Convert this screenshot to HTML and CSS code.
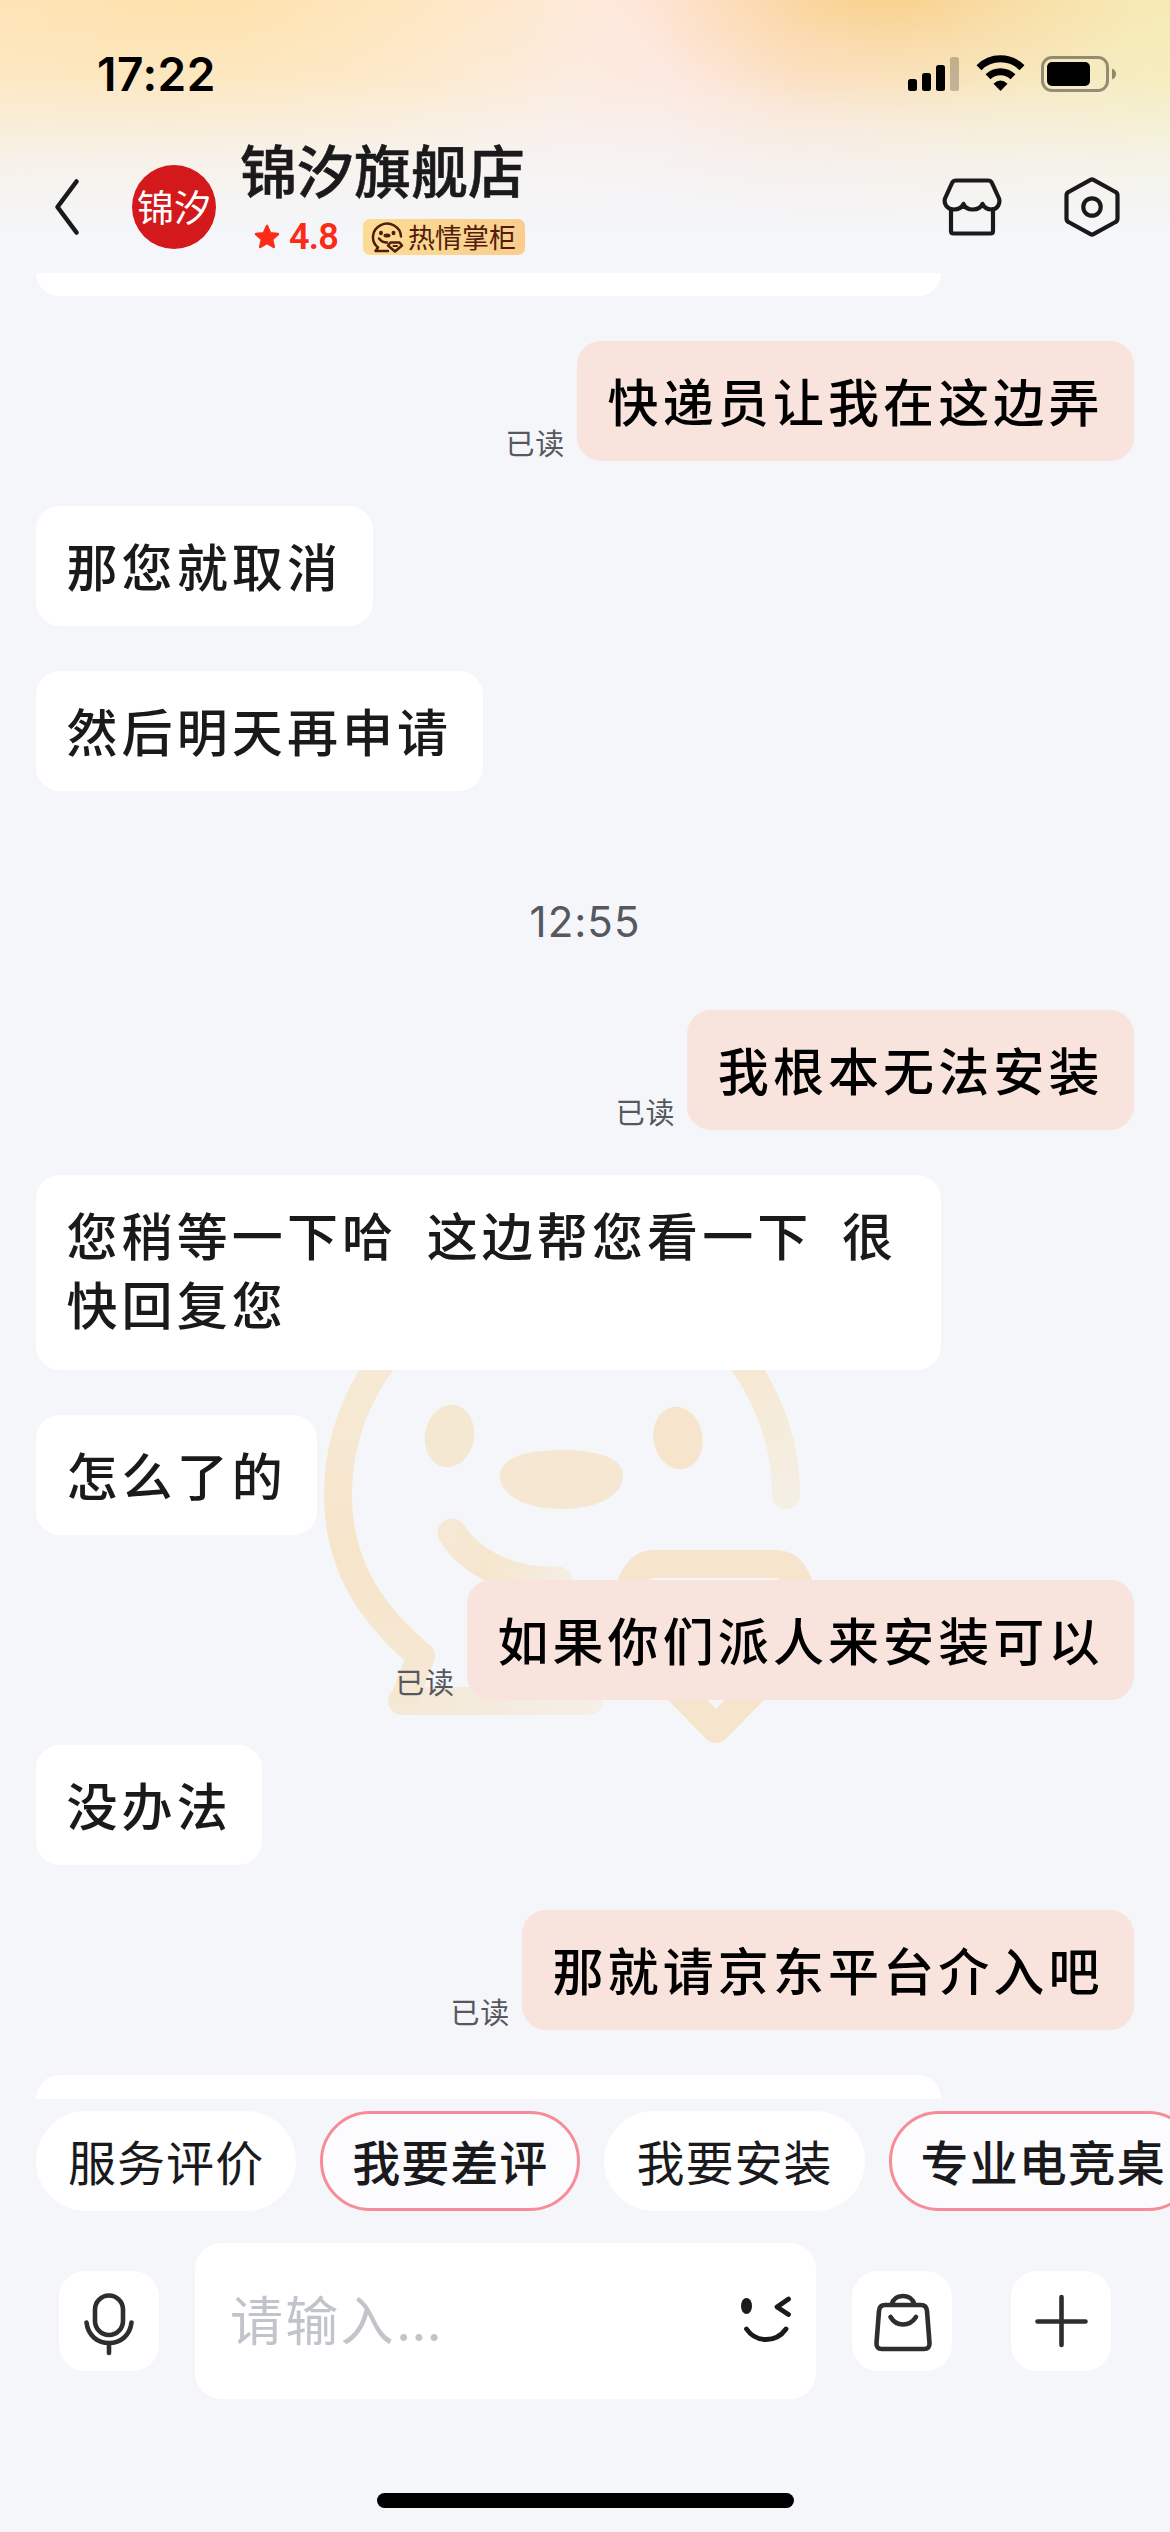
FILE: index.html
```html
<!DOCTYPE html>
<html lang="zh-CN">
<head>
<meta charset="utf-8">
<title>锦汐旗舰店</title>
<link rel="stylesheet" href="styles.css">
</head>
<body>
<div class="screen">
  <header class="header">
    <div class="status">
      <span class="status-time">17:22</span>
      <div class="status-icons">
        <svg class="signal" width="52" height="36" viewBox="0 0 52 36">
          <rect x="0" y="24" width="9" height="12" rx="2.5"/>
          <rect x="14" y="18" width="9" height="18" rx="2.5"/>
          <rect x="28" y="10" width="9" height="26" rx="2.5"/>
          <rect x="42" y="2" width="9" height="34" rx="2.5" opacity=".22"/>
        </svg>
        <svg class="wifi" width="49" height="36" viewBox="0 0 48 36" fill="none" stroke="#000" stroke-width="7">
          <path d="M2.5 12.7A30.5 30.5 0 0 1 45.500 12.700"/>
          <path d="M11.500 21.700A18 18 0 0 1 36.500 21.700"/>
          <path d="M24 36l-7-7.200q7-6.600 14 0z" fill="#000" stroke="none"/>
        </svg>
        <svg class="battery" width="76" height="36" viewBox="0 0 76 36">
          <rect x="1.500" y="1.500" width="65" height="33" rx="9.500" fill="none" stroke="#000" stroke-width="3" opacity=".4"/>
          <rect x="6" y="6" width="43" height="24" rx="5"/>
          <path d="M71 12.500q4 1.500 4 5.500t-4 5.500z" opacity=".42"/>
        </svg>
      </div>
    </div>
    <div class="nav">
      <svg class="back" width="28" height="60" viewBox="0 0 28 60" fill="none" stroke="#1a1a1c" stroke-width="4.600" stroke-linecap="round" stroke-linejoin="round"><path d="M23.500 4.500L4.500 30L23.500 55.500"/></svg>
      <div class="avatar">锦汐</div>
      <div class="shop">
        <div class="shop-name">锦汐旗舰店</div>
        <div class="shop-meta">
          <svg class="star" width="28" height="28" viewBox="0 0 28 28" fill="#fa2c19" stroke="#fa2c19" stroke-width="2.500" stroke-linejoin="round"><path d="M14 3l3.200 7.200 7.800.8-5.900 5.200 1.700 7.700-6.800-4-6.800 4 1.700-7.700L3 11l7.800-.8z"/></svg>
          <span class="score">4.8</span>
          <span class="badge">
            <svg width="34" height="32" viewBox="0 0 34 32" fill="none" stroke="#4f1d0a" stroke-width="2.500" stroke-linecap="round" stroke-linejoin="round">
              <path d="M31 15.500A14 13.500 0 1 0 8 26.500L5.500 30H18"/>
              <path d="M9 17.500q3 4 8 4"/>
              <path d="M20.500 21.500h9l2.500 3-7 6-7-6z"/>
              <path d="M23.500 25h3.500" stroke-width="2"/>
              <g fill="#4f1d0a" stroke="none"><ellipse cx="11" cy="12" rx="2" ry="2.200"/><ellipse cx="23.500" cy="12" rx="2" ry="2.200"/><ellipse cx="17" cy="14.500" rx="3.500" ry="2"/></g>
            </svg>
            <span>热情掌柜</span>
          </span>
        </div>
      </div>
      <div class="nav-actions">
        <svg width="60" height="60" viewBox="0 0 60 60" fill="none" stroke="#1a1a1c" stroke-width="4.200" stroke-linecap="round" stroke-linejoin="round">
          <path d="M14 3.500h32q3 0 4 2.500l7 15.500c1.500 5-1.500 11-7.500 11-4 0-7-1.500-9-5.500-2 4-5 5.500-9.500 5.500S23 31 21.500 27c-2 4-5.500 5.500-9.500 5.500C5 32.500 1.500 27 3 21.500L10 6q1-2.500 4-2.500z"/>
          <path d="M9 32v22q0 2.500 2.500 2.500h37q2.500 0 2.500-2.500V32"/>
        </svg>
        <svg width="56" height="62" viewBox="0 0 56 62" fill="none" stroke="#1a1a1c" stroke-width="4.200" stroke-linejoin="round">
          <path d="M26.500 3.800q1.500-.8 3 0L51.500 16q2 1 2 3.500v23q0 2.500-2 3.500L29.500 58.200q-1.500.8-3 0L4.500 46q-2-1-2-3.500v-23q0-2.500 2-3.500z"/>
          <circle cx="28" cy="31" r="8.700"/>
        </svg>
      </div>
    </div>
  </header>

  <main class="chat">
    <svg class="watermark" width="500" height="500" viewBox="320 1260 500 500" fill="none" stroke-linecap="round" stroke-linejoin="round">
      <defs>
        <linearGradient id="ring-left" gradientUnits="userSpaceOnUse" x1="0" y1="1360" x2="0" y2="1710">
          <stop offset="0" stop-color="#f6ead6"/><stop offset=".55" stop-color="#f7e5cb"/><stop offset="1" stop-color="#f5e8d4"/>
        </linearGradient>
        <linearGradient id="ring-right" gradientUnits="userSpaceOnUse" x1="0" y1="1370" x2="0" y2="1510">
          <stop offset="0" stop-color="#f6e9d3"/><stop offset="1" stop-color="#f4efe6"/>
        </linearGradient>
        <linearGradient id="foot" gradientUnits="userSpaceOnUse" x1="390" y1="1700" x2="605" y2="1700">
          <stop offset="0" stop-color="#f5e8d4"/><stop offset="1" stop-color="#f4efe8"/>
        </linearGradient>
        <linearGradient id="smile" gradientUnits="userSpaceOnUse" x1="440" y1="1530" x2="572" y2="1580">
          <stop offset="0" stop-color="#f5e9d6"/><stop offset=".4" stop-color="#f6e6ce"/><stop offset="1" stop-color="#f4eee4"/>
        </linearGradient>
      </defs>
      <path d="M589 1701H402" stroke="url(#foot)" stroke-width="28"/>
      <path d="M562 1271A224 224 0 0 0 338 1495C338 1560 366 1610 421 1656L404 1700" stroke="url(#ring-left)" stroke-width="28"/>
      <path d="M562 1271A224 224 0 0 1 786 1495" stroke="url(#ring-right)" stroke-width="28"/>
      <path d="M452 1533C470 1562 510 1583 558 1581" stroke="url(#smile)" stroke-width="29"/>
      <path d="M654 1564H776Q790 1564 798 1582L809 1608V1634L716 1729L623 1634V1608L632 1582Q640 1564 654 1564Z" stroke="#f6e5cc" stroke-width="28"/>
      <g fill="#f5e8d3" stroke="none">
        <ellipse cx="449.500" cy="1436" rx="24.500" ry="31.500" transform="rotate(10 449.500 1436)"/>
        <ellipse cx="678" cy="1438" rx="24.500" ry="31.500" transform="rotate(-10 678 1438)" fill="#f6e5cc"/>
        <path d="M561 1450C598 1450 623 1458 623 1476C623 1495 598 1509 562 1509S500 1495 500 1476C500 1458 525 1450 561 1450Z" fill="#f5e7d1"/>
      </g>
    </svg>
    <div class="bubble cut-top"></div>
    <div class="row mine"><span class="read">已读</span><div class="bubble">快递员让我在这边弄</div></div>
    <div class="row"><div class="bubble">那您就取消</div></div>
    <div class="row"><div class="bubble">然后明天再申请</div></div>
    <div class="time">12:55</div>
    <div class="row mine"><span class="read">已读</span><div class="bubble">我根本无法安装</div></div>
    <div class="row"><div class="bubble multi">您稍等一下哈&nbsp; 这边帮您看一下&nbsp; 很快回复您</div></div>
    <div class="row"><div class="bubble">怎么了的</div></div>
    <div class="row mine"><span class="read">已读</span><div class="bubble">如果你们派人来安装可以</div></div>
    <div class="row"><div class="bubble">没办法</div></div>
    <div class="row mine"><span class="read">已读</span><div class="bubble">那就请京东平台介入吧</div></div>
    <div class="bubble cut-bottom"></div>
  </main>

  <footer class="composer">
    <div class="chips">
      <span class="chip">服务评价</span>
      <span class="chip hot">我要差评</span>
      <span class="chip">我要安装</span>
      <span class="chip hot">专业电竞桌</span>
    </div>
    <div class="inputbar">
      <div class="tool">
        <svg width="100" height="100" viewBox="0 0 100 100" fill="none" stroke="#2e2e30" stroke-width="4.600" stroke-linecap="round">
          <rect x="36" y="24.500" width="28" height="39.500" rx="14"/>
          <path d="M27.500 51.500C29 64 38 72 50 72S71 64 72.500 51.500M50 72v10"/>
        </svg>
      </div>
      <div class="field">
        <span class="placeholder">请输入<span class="dots">...</span></span>
        <svg width="54" height="50" viewBox="0 0 54 50" fill="none" stroke="#1a1a1c" stroke-width="4.800" stroke-linecap="round" stroke-linejoin="round">
          <ellipse cx="7.500" cy="11" rx="5.500" ry="8" fill="#1a1a1c" stroke="none"/>
          <path d="M49.500 4L38 12L49.500 19.500M7.500 34C17 48 37 48 47 34"/>
        </svg>
      </div>
      <div class="tool bag">
        <svg width="100" height="100" viewBox="0 0 100 100" fill="none" stroke="#2e2e30" stroke-width="4.600" stroke-linecap="round" stroke-linejoin="round">
          <path d="M33 34h36q5.500 0 6 6l2.500 32q.4 6-5.500 6H30q-6 0-5.500-6L27 40q.4-6 6-6zM39.500 34q2-9 11.500-9t11.500 9M38.500 46q4.500 7.500 12.500 7.500T64 46"/>
        </svg>
      </div>
      <div class="tool plus">
        <svg width="100" height="100" viewBox="0 0 100 100" fill="none" stroke="#2e2e30" stroke-width="4.600" stroke-linecap="round">
          <path d="M50.500 26v48M26.500 50.500h48"/>
        </svg>
      </div>
    </div>
    <div class="home"></div>
  </footer>
</div>
</body>
</html>
```
FILE: styles.css
```css
* { box-sizing: border-box; }

body {
  margin: 0;
  background: #f4f6fa;
  font-family: "Noto Sans CJK SC", sans-serif;
  color: #1a1a1c;
}

svg { display: block; flex: none; }

.screen {
  width: 1170px;
  height: 2532px;
  display: flex;
  flex-direction: column;
  overflow: hidden;
}

.header {
  height: 273px;
  flex: none;
  background:
    linear-gradient(180deg, rgba(244, 246, 250, 0) 0, rgba(244, 246, 250, .15) 75px, rgba(244, 246, 250, .72) 160px, #f4f6fa 235px),
    radial-gradient(ellipse 260px 130px at 885px -10px, #f9d08a 0, rgba(249, 208, 138, .4) 50%, rgba(249, 208, 138, 0) 100%),
    radial-gradient(ellipse 420px 260px at 190px 0, #fee2ac 0, rgba(254, 226, 172, 0) 100%),
    linear-gradient(90deg, #fee7c2 0, #feebd2 32%, #fdeadc 48%, #fee6da 57%, #fddfc4 68%, #f8e6b8 85%, #f6ebb4 100%);
}

.status {
  height: 146px;
  padding: 55px 53px 0 97px;
  display: flex;
  justify-content: space-between;
  align-items: flex-start;
}
.status-time {
  font: 600 46px/38px Inter, sans-serif;
  color: #000;
  letter-spacing: .5px;
}
.status-icons { display: flex; }
.wifi { margin-left: 16px; }
.battery { margin: 1px 0 0 16px; }

.nav {
  height: 122px;
  padding: 0 50px 0 53px;
  display: flex;
  align-items: center;
}
.avatar {
  width: 84px;
  height: 84px;
  margin-left: 51px;
  border-radius: 50%;
  background: #d4191c;
  color: #fff;
  font-size: 37px;
  font-weight: 400;
  line-height: 82px;
  text-align: center;
}
.shop { margin-left: 24px; display: flex; flex-direction: column; align-self: flex-start; }
.shop-name {
  font-size: 57px;
  font-weight: 500;
  line-height: 56px;
  margin-top: -6px;
  white-space: nowrap;
  -webkit-text-stroke: .6px #1a1a1c;
}
.shop-meta { display: flex; align-items: center; height: 36px; margin-top: 23px; padding-left: 13px; }
.score {
  margin-left: 8px;
  width: 60px;
  font: 600 36px/36px Roboto, sans-serif;
  letter-spacing: -.8px;
  color: #fa2c19;
}
.badge {
  margin-left: 14px;
  width: 162px;
  height: 36px;
  padding-left: 7px;
  display: flex;
  align-items: center;
  gap: 4px;
  border-radius: 7px;
  background: linear-gradient(90deg, #fcdc94, #facd8e);
  color: #4f1d0a;
  font-size: 27px;
  line-height: 34px;
  white-space: nowrap;
}
.nav-actions { margin-left: auto; display: flex; align-items: center; gap: 62px; }

.chat {
  position: relative;
  height: 1826px;
  flex: none;
  padding: 0 36px;
  display: flex;
  flex-direction: column;
  gap: 45px;
  overflow: hidden;
}
.watermark { position: absolute; left: 320px; top: 987px; }

.row { position: relative; display: flex; align-items: flex-end; }
.mine { justify-content: flex-end; }

.bubble {
  min-height: 120px;
  padding: 25px 30.500px 26px;
  border-radius: 24px;
  background: #fff;
  font-size: 51px;
  font-weight: 500;
  line-height: 69px;
  letter-spacing: 4.100px;
  word-spacing: -.8px;
  white-space: nowrap;
}
.mine .bubble { background: #f8e3dd; color: #000; }
.multi { width: 905px; padding-bottom: 32px; white-space: normal; }
.cut-top, .cut-bottom { width: 905px; min-height: 0; padding: 0; flex: none; }
.cut-top { height: 23px; border-radius: 0 0 24px 24px; }
.cut-bottom { height: 24px; border-radius: 24px 24px 0 0; }

.read {
  margin: 0 12px 1.500px 0;
  font-size: 29px;
  line-height: 36px;
  color: #56585e;
  letter-spacing: .8px;
}
.time {
  height: 129px;
  padding-top: 21px;
  text-align: center;
  font: 400 42px/129px Inter, sans-serif;
  letter-spacing: 1px;
  color: #56585e;
}

.composer { flex: 1; display: flex; flex-direction: column; align-items: center; }
.chips {
  align-self: stretch;
  display: flex;
  gap: 24px;
  padding: 12px 0 0 36px;
  overflow: hidden;
}
.chip {
  flex: none;
  height: 100px;
  padding: 0 32px;
  border-radius: 50px;
  background: #fff;
  font-size: 48px;
  line-height: 98px;
  letter-spacing: 1.050px;
  white-space: nowrap;
}
.hot {
  border: 3px solid #f78b97;
  padding: 0 29px;
  line-height: 92px;
  background: #fcfcfe;
  font-weight: 500;
}

.inputbar {
  align-self: stretch;
  height: 156px;
  margin-top: 32px;
  padding-left: 59px;
  display: flex;
  align-items: center;
}
.tool { width: 100px; height: 100px; flex: none; border-radius: 26px; background: #fff; }
.field {
  width: 621px;
  height: 156px;
  flex: none;
  margin-left: 36px;
  padding: 0 23px 2px 35px;
  border-radius: 26px;
  background: #fff;
  display: flex;
  align-items: center;
  justify-content: space-between;
}
.placeholder { font-size: 53px; line-height: 70px; letter-spacing: 2.300px; color: #c2c4cb; }
.dots { font-family: Inter, sans-serif; letter-spacing: 0; }
.bag { margin-left: 36px; }
.plus { margin-left: 59px; }

.home { width: 417px; height: 15px; margin-top: 94px; border-radius: 8px; background: #000; }
```
